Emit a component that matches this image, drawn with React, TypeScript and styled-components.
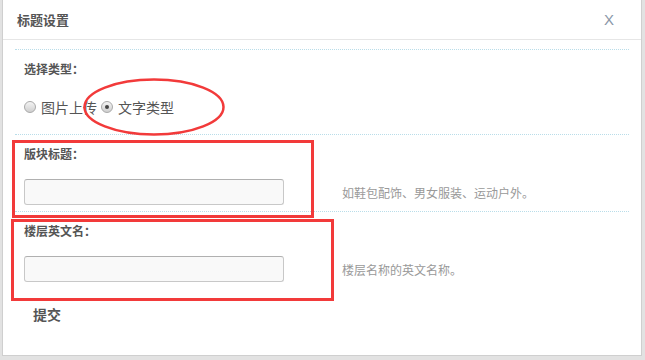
import React from "react";
import styled, { createGlobalStyle } from "styled-components";

const Global = createGlobalStyle`
  html, body { margin: 0; padding: 0; }
  body {
    background: #e2e2e2;
    font-family: "Liberation Sans", "Noto Sans CJK SC", sans-serif;
    width: 645px;
    height: 360px;
    overflow: hidden;
  }
`;

const Dialog = styled.div`
  position: relative;
  box-sizing: border-box;
  margin-left: 2px;
  width: 640px;
  height: 356px;
  background: #fff;
  border: 1px solid #cfcfcf;
  border-top: none;
  display: flex;
  flex-direction: column;
`;

const Header = styled.div`
  height: 40px;
  box-sizing: border-box;
  border-bottom: 1px solid #e6e6e6;
  display: flex;
  align-items: center;
  justify-content: space-between;
  padding: 0 27px 0 14px;
`;

const Title = styled.h3`
  margin: 0;
  font-size: 13px;
  font-weight: bold;
  color: #555;
  font-family: "Noto Sans CJK SC", sans-serif;
`;

const Close = styled.span`
  font-size: 15px;
  color: #8a97a8;
  font-family: "Liberation Sans", sans-serif;
  margin-top: -1px;
`;

const Body = styled.div`
  padding: 9px 12px 0;
  display: flex;
  flex-direction: column;
`;

const Section = styled.div<{ $pt: number; $pb: number }>`
  border-top: 1px dotted #b9dde9;
  padding: ${(p) => p.$pt}px 0 ${(p) => p.$pb}px 9px;
  display: flex;
  flex-direction: column;
`;

const Label = styled.div`
  font-size: 12px;
  line-height: 16px;
  font-weight: bold;
  color: #555;
  font-family: "Noto Sans CJK SC", sans-serif;
`;

const RadioRow = styled.div`
  display: flex;
  align-items: center;
  margin-top: 21px;
`;

const RadioItem = styled.label`
  display: flex;
  align-items: center;
  margin-right: 4px;
  font-size: 14px;
  line-height: 18px;
  color: #555;
  font-family: "Noto Sans CJK SC", sans-serif;
`;

const RadioDot = styled.span<{ $checked?: boolean }>`
  box-sizing: border-box;
  width: 12px;
  height: 12px;
  border-radius: 50%;
  border: 1px solid #a9a9a9;
  background: linear-gradient(#f4f4f4, #cfcfcf);
  margin-right: 5px;
  display: flex;
  align-items: center;
  justify-content: center;
  &::after {
    content: "";
    display: ${(p) => (p.$checked ? "block" : "none")};
    width: 4px;
    height: 4px;
    border-radius: 50%;
    background: #444;
  }
`;

const FieldRow = styled.div`
  display: flex;
  align-items: center;
  margin-top: 17px;
`;

const Input = styled.input`
  box-sizing: border-box;
  width: 260px;
  height: 26px;
  border: 1px solid #c8c8c8;
  border-top-color: #b0b0b0;
  border-radius: 3px;
  background: #f9f9f9;
  margin: 0;
  padding: 0 6px;
`;

const Hint = styled.span`
  margin-left: 58px;
  font-size: 12px;
  color: #999;
  font-family: "Noto Sans CJK SC", sans-serif;
`;

const Submit = styled.button`
  align-self: flex-start;
  margin: 22px 0 0 18px;
  padding: 0;
  border: none;
  background: none;
  font-size: 14px;
  line-height: 20px;
  font-weight: bold;
  color: #555;
  font-family: "Noto Sans CJK SC", sans-serif;
`;

const RedBox = styled.div<{ $l: number; $t: number; $w: number; $h: number }>`
  position: absolute;
  left: ${(p) => p.$l}px;
  top: ${(p) => p.$t}px;
  width: ${(p) => p.$w}px;
  height: ${(p) => p.$h}px;
  box-sizing: border-box;
  border: 3px solid #f23a3a;
  pointer-events: none;
`;

const Ellipse = styled.svg`
  position: absolute;
  left: 78px;
  top: 77px;
  pointer-events: none;
`;

export default function App() {
  return (
    <>
      <Global />
      <Dialog>
        <Header>
          <Title>标题设置</Title>
          <Close>X</Close>
        </Header>
        <Body>
          <Section $pt={11} $pb={18}>
            <Label>选择类型：</Label>
            <RadioRow>
              <RadioItem>
                <RadioDot />
                图片上传
              </RadioItem>
              <RadioItem>
                <RadioDot $checked />
                文字类型
              </RadioItem>
            </RadioRow>
          </Section>
          <Section $pt={11} $pb={6}>
            <Label>版块标题：</Label>
            <FieldRow>
              <Input />
              <Hint>如鞋包配饰、男女服装、运动户外。</Hint>
            </FieldRow>
          </Section>
          <Section $pt={11} $pb={0}>
            <Label>楼层英文名：</Label>
            <FieldRow>
              <Input />
              <Hint>楼层名称的英文名称。</Hint>
            </FieldRow>
          </Section>
          <Submit>提交</Submit>
        </Body>
        <Ellipse width="146" height="60" viewBox="0 0 146 60">
          <ellipse cx="73" cy="30" rx="69.5" ry="27.5" fill="none" stroke="#f23a3a" strokeWidth="2.5" />
        </Ellipse>
        <RedBox $l={9} $t={140} $w={302} $h={78} />
        <RedBox $l={8} $t={219} $w={323} $h={82} />
      </Dialog>
    </>
  );
}
